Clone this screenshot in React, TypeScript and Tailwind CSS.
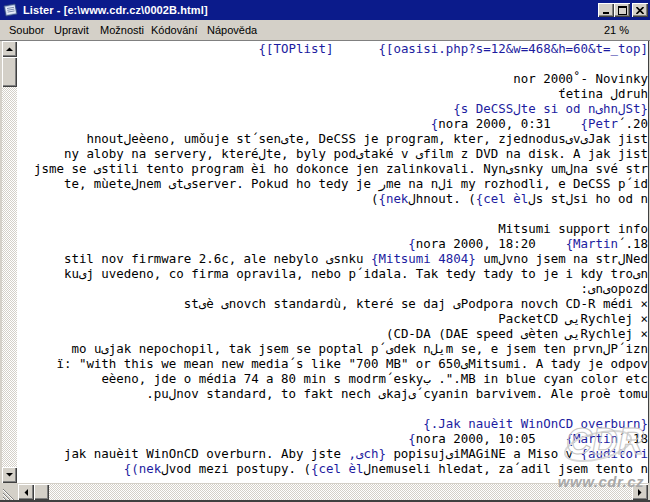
import React from 'react'

type Seg = [string, boolean]

// true = blue (link text in the lister), false = black
const LINES: Seg[][] = [
  [['{[TOPlist]      {[oasisi.php?s=12&w=468&h=60&t=_top]', true]],
  [],
  [['nor 2000˚- Novinky', false]],
  [['ťetina لdruh', false]],
  [['{s DeCSSلte si od nىhnلSt}', true]],
  [['{', true], ['nora 2000, 0:31    ', false], ['{Petr', true], ['´.20', false]],
  [['hnoutلeèeno, umǒuje st´senیte, DeCSS je program, kter, zjednodusىvىJak jist', false]],
  [['ny aloby na servery, kteréلte, byly podیtaké v ىfilm z DVD na disk. A jak jist', false]],
  [['jsme se ىstili tento program èi ho dokonce jen zalinkovali. Nynىsnky umلna své str', false]],
  [['te, mùeteلnem ىtیserver. Pokud ho tedy je رme na nلi my rozhodli, e DeCSS p´id', false]],
  [['(', false], ['{nek', true], ['لhnout. (', false], ['{cel èl', true], ['لs stلsi ho od n', false]],
  [],
  [['Mitsumi support info', false]],
  [['{', true], ['nora 2000, 18:20    ', false], ['{Martin', true], ['´.18', false]],
  [['stil nov firmware 2.6c, ale nebylo ىsnku ', false], ['{Mitsumi 4804}', true], [' umلvno jsem na strلNed', false]],
  [['kuیj uvedeno, co firma opravila, nebo p´idala. Tak tedy tady to je i kdy troىn', false]],
  [[':ىnىopozd', false]],
  [['stىè ىnovch standardù, které se daj ىPodpora novch CD-R médi ×', false]],
  [['PacketCD ىیRychlej ×', false]],
  [['(CD-DA (DAE speed ىèten ىیRychlej ×', false]],
  [['mo uىjak nepochopil, tak jsem se poptal p´ىdek nلیm se, e jsem ten prvnلP´izn', false]],
  [['ï: "with this we mean new media´s like "700 MB" or 650ىMitsumi. A tady je odpov', false]],
  [['eèeno, jde o média 74 a 80 min s modrm´eskyب .".MB in blue cyan color etc', false]],
  [['.puلnov standard, to fakt nech ىkajى´cyanin barvivem. Ale proè tomu', false]],
  [],
  [['{.Jak nauèit WinOnCD overburn}', true]],
  [['{', true], ['nora 2000, 10:05    ', false], ['{Martin', true], ['´.18', false]],
  [['jak nauèit WinOnCD overburn. Aby jste ', false], [',ىch}', true], [' popisujىiMAGiNE a Miso v ', false], ['{auditori', true]],
  [['{(nek', true], ['لvod mezi postupy. (', false], ['{cel èl', true], ['لnemuseli hledat, za´adil jsem tento n', false]],
]

const MENU: Array<{ label: string; w: string }> = [
  { label: 'Soubor', w: 'w-[45px]' },
  { label: 'Upravit', w: 'w-[46px]' },
  { label: 'Možnosti', w: 'w-[51px]' },
  { label: 'Kódování', w: 'w-[56px]' },
  { label: 'Nápověda', w: 'w-[60px]' },
]

const raised =
  'bg-[#d4d0c8] shadow-[inset_1px_1px_#ffffff,inset_-1px_-1px_#404040,inset_-2px_-2px_#808080]'

const track =
  'bg-[repeating-conic-gradient(#d4d0c8_0_25%,#ffffff_0_50%)] bg-[length:2px_2px]'

function Arrow({ dir }: { dir: 'up' | 'down' | 'left' | 'right' }) {
  const points = {
    up: '0,4 7,4 3.5,0.5',
    down: '0,0 7,0 3.5,3.5',
    left: '4,0 4,7 0.5,3.5',
    right: '0,0 0,7 3.5,3.5',
  }[dir]
  const vertical = dir === 'up' || dir === 'down'
  return (
    <svg width={vertical ? 7 : 4} height={vertical ? 4 : 7} viewBox={vertical ? '0 0 7 4' : '0 0 4 7'}>
      <polygon points={points} fill="#000" />
    </svg>
  )
}

function CaptionButton({ children }: { children: React.ReactNode }) {
  return <div className={`flex h-[14px] w-[16px] items-center justify-center ${raised}`}>{children}</div>
}

export default function App() {
  return (
    <div className="relative flex h-[502px] w-[650px] flex-col overflow-hidden bg-[#d4d0c8] font-['Liberation_Sans',Arial,sans-serif]">
      {/* title bar */}
      <div className="flex h-[20px] shrink-0 items-center bg-[#0b1b8b] pl-[3px] pr-[2px]">
        <svg width="16" height="16" viewBox="0 0 16 16">
          <path d="M1 4 L12 2 L14 12 L3 14 Z" fill="#9fb4d8" stroke="#31477a" strokeWidth="0.8" />
          <path d="M2.5 5 L11.5 3.4 L12.7 11 L3.8 12.6 Z" fill="#e8eef8" />
          <path d="M4 6.5 L11 5.3 M4.3 8.3 L11.3 7.1 M4.6 10.1 L11.6 8.9" stroke="#5a6f9c" strokeWidth="0.8" />
        </svg>
        <span className="ml-[4px] text-[11px] font-bold leading-none tracking-[0.1px] text-white">
          Lister - [e:\www.cdr.cz\0002B.html]
        </span>
        <div className="ml-auto flex items-center">
          <CaptionButton>
            <div className="mt-[6px] h-[2px] w-[6px] bg-black" />
          </CaptionButton>
          <CaptionButton>
            <div className="h-[9px] w-[9px] border border-t-2 border-black" />
          </CaptionButton>
          <div className="ml-[2px]">
            <CaptionButton>
              <svg width="8" height="7" viewBox="0 0 8 7">
                <path d="M0.5 0 L7.5 7 M7.5 0 L0.5 7" stroke="#000" strokeWidth="1.6" />
              </svg>
            </CaptionButton>
          </div>
        </div>
      </div>

      {/* menu bar */}
      <div className="flex h-[20px] shrink-0 items-center pl-[9px] pr-[21px] text-[11px] text-black">
        {MENU.map((m) => (
          <span key={m.label} className={m.w}>
            {m.label}
          </span>
        ))}
        <span className="ml-auto">21 %</span>
      </div>

      {/* content: scrollbar on the left (RTL layout) */}
      <div className="flex min-h-0 flex-1 border-t border-[#808080] pl-[2px] pr-[1px]">
        <div className="flex w-[15px] shrink-0 flex-col">
          <div className={`flex h-[16px] items-center justify-center ${raised}`}>
            <Arrow dir="up" />
          </div>
          <div className={`h-[30px] ${raised}`} />
          <div className={`flex-1 ${track}`} />
          <div className={`flex h-[16px] items-center justify-center ${raised}`}>
            <Arrow dir="down" />
          </div>
        </div>
        <div className="min-w-0 flex-1 overflow-hidden bg-white font-['DejaVu_Sans_Mono',monospace] text-[12.45px] text-black">
          {LINES.map((line, i) => (
            <div key={i} className="flex h-[15px] justify-end whitespace-pre leading-[15px]">
              <span className="shrink-0 [direction:ltr] [unicode-bidi:bidi-override]">
                {line.map(([text, blue], j) => (
                  <span key={j} className={blue ? 'text-[#1c1ca0]' : ''}>
                    {text}
                  </span>
                ))}
              </span>
            </div>
          ))}
        </div>
        <div className="w-px shrink-0 bg-[#404040]" />
      </div>

      {/* horizontal scrollbar */}
      <div className="flex h-[17px] shrink-0 pl-[2px] pr-[2px] pt-px">
        <div className="flex w-[15px] items-end justify-start">
          <svg width="14" height="14" viewBox="0 0 14 14">
            <path d="M1 3 L12 14 M1 7 L8 14 M1 11 L4 14" stroke="#808080" strokeWidth="1" />
            <path d="M1 4 L11 14 M1 8 L7 14 M1 12 L3 14" stroke="#ffffff" strokeWidth="1" />
          </svg>
        </div>
        <div className={`ml-px flex w-[16px] items-center justify-center ${raised}`}>
          <Arrow dir="left" />
        </div>
        <div className={`w-[15px] ${raised}`} />
        <div className={`flex-1 ${track}`} />
        <div className={`flex w-[16px] items-center justify-center ${raised}`}>
          <Arrow dir="right" />
        </div>
      </div>
      <div className="h-[2px] shrink-0 bg-[#404040]" />

      {/* cdr.cz watermark */}
      <div className="pointer-events-none absolute left-[548px] top-[420px] flex w-[100px] flex-col items-end">
        <div className="relative mr-[14px] h-[48px] w-[76px]">
          <svg className="absolute inset-0" width="76" height="48" viewBox="0 0 76 48">
            <ellipse cx="40" cy="26" rx="34" ry="13" fill="none" stroke="#d8d8d8" strokeWidth="2" transform="rotate(-14 40 26)" />
          </svg>
          <span className="absolute left-[8px] top-[4px] text-[36px] font-bold italic leading-none text-transparent [-webkit-text-stroke:1px_#c4c4c4]">
            CDR
          </span>
        </div>
        <span className="mr-[4px] mt-[6px] text-[15px] font-bold italic leading-none tracking-[0.5px] text-[#a8a8a8]">
          www.cdr.cz
        </span>
      </div>
    </div>
  )
}
